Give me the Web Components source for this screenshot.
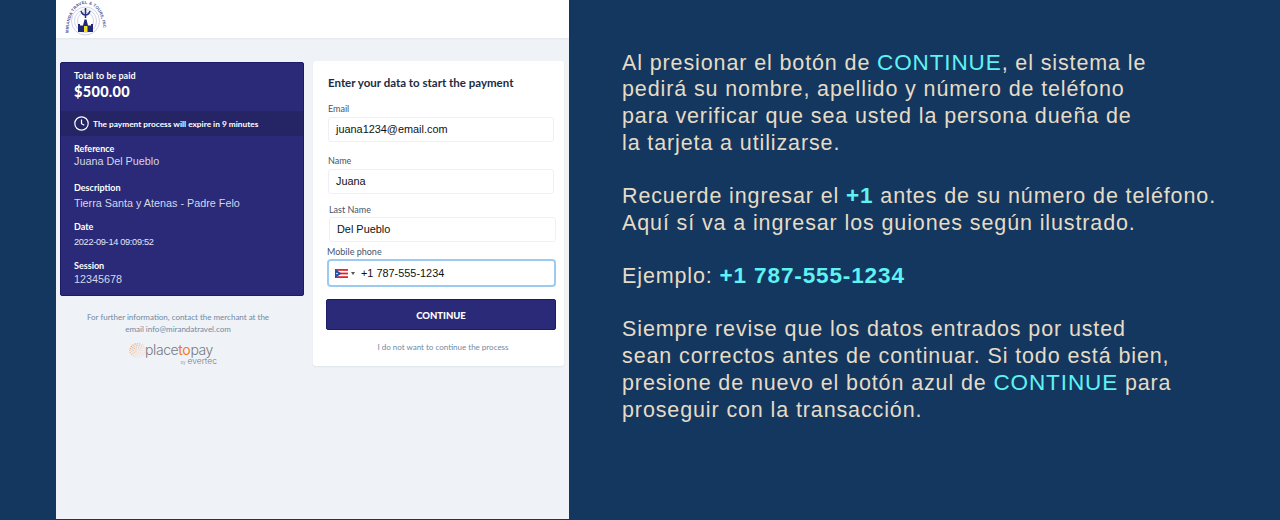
<!DOCTYPE html>
<html lang="es">
<head>
<meta charset="utf-8">
<title>Checkout</title>
<style>
    html, body { margin: 0; height: 520px; overflow: hidden; background: #14375f; }
    body { display: flex; font-family: "Liberation Sans", sans-serif; }
</style>
</head>
<body>
<checkout-panel></checkout-panel>
<help-text></help-text>

<script>
class MerchantLogo extends HTMLElement {
    constructor() {
        super();
        this.attachShadow({ mode: 'open' });
        this.shadowRoot.innerHTML = `
            <style>
                :host { display: block; width: 44px; height: 36px; }
                svg { display: block; }
                text { font: bold 4.2px "Liberation Sans", sans-serif; fill: #4a5499; }
            </style>
            <svg width="44" height="36" viewBox="0 0 44 36">
                <defs><path id="arc" d="M4.5 33 C4.5 -6 39.5 -6 39.5 33"></path></defs>
                <text textLength="70"><textPath href="#arc" textLength="70" lengthAdjust="spacing">MIRANDA TRAVEL &amp; TOURS, INC</textPath></text>
                <g fill="none" stroke="#c3c8de" stroke-width=".8">
                    <ellipse cx="21.5" cy="21" rx="14" ry="14"></ellipse>
                    <ellipse cx="21.5" cy="21" rx="11" ry="11.5"></ellipse>
                    <ellipse cx="21.5" cy="21" rx="8" ry="9"></ellipse>
                </g>
                <path d="M21.5 8v10M17 11c1 3 2.500 4 4.500 4s3.500-1 4.500-4" fill="none" stroke="#2a2f80" stroke-width="1.500"></path>
                <path d="M14 32V24h2v1.500h3l1.500-6h2l1.500 6h3V24h2v8z" fill="#20267a"></path>
                <rect x="20" y="26" width="3.500" height="6" fill="#f2e21c"></rect>
            </svg>
        `;
    }
}

class SummaryItem extends HTMLElement {
    constructor() {
        super();
        this.attachShadow({ mode: 'open' });
        this.shadowRoot.innerHTML = `
            <style>
                :host { display: block; color: #fff; }
                .label { font: 700 9px/12px "Lato", sans-serif; }
                .value { font: 10.800px/14px "Liberation Sans", sans-serif; color: #d5d7e6; margin-top: var(--gap, 0); }
            </style>
            <div class="label"></div>
            <div class="value"><slot></slot></div>
        `;
    }

    connectedCallback() {
        this.shadowRoot.querySelector('.label').textContent = this.getAttribute('label');
    }
}

class PaymentSummary extends HTMLElement {
    constructor() {
        super();
        this.attachShadow({ mode: 'open' });
        this.shadowRoot.innerHTML = `
            <style>
                :host {
                    display: block; box-sizing: border-box; height: 234px;
                    background: #2a2a78; border: 1px solid #1b1b68; border-radius: 2px;
                    color: #fff; font-family: "Lato", sans-serif;
                }
                .total { padding: 7px 13px 0; height: 48px; box-sizing: border-box; }
                .total div { font-weight: 700; font-size: 9px; line-height: 12px; }
                .total strong { display: block; font-weight: 900; font-size: 14.500px; line-height: 19px; letter-spacing: .3px; }
                .expire {
                    display: flex; align-items: center; gap: 4px; height: 25px; padding: 0 13px;
                    background: #252566; font-weight: 700; font-size: 8.300px;
                }
                .list { display: flex; flex-direction: column; padding: 7px 13px 0; }
                summary-item { height: 39px; }
                summary-item:nth-child(1) { --gap: -1px; }
                summary-item:nth-child(2) { --gap: 2px; }
                summary-item:nth-child(3) { --gap: 1px; }
                .date { font-size: 9.200px; letter-spacing: -.3px; color: #e4e6f4; }
            </style>
            <div class="total">
                <div>Total to be paid</div>
                <strong>$500.00</strong>
            </div>
            <div class="expire">
                <svg width="15" height="15" viewBox="0 0 15 15" fill="none" stroke="#fff" stroke-width="1.2">
                    <circle cx="7.5" cy="7.5" r="6.7"></circle>
                    <path d="M7.5 3.5v4.2l2.8 1.6"></path>
                </svg>
                <span>The payment process will expire in 9 minutes</span>
            </div>
            <div class="list">
                <summary-item label="Reference">Juana Del Pueblo</summary-item>
                <summary-item label="Description">Tierra Santa y Atenas - Padre Felo</summary-item>
                <summary-item label="Date"><span class="date">2022-09-14 09:09:52</span></summary-item>
                <summary-item label="Session">12345678</summary-item>
            </div>
        `;
    }
}

class PlaceToPayLogo extends HTMLElement {
    constructor() {
        super();
        this.attachShadow({ mode: 'open' });
        // sunburst of dots, strong at the top left and fading to the bottom right
        const dots = [];
        for (let ring = 1; ring < 5; ring++) {
            const count = ring * 5;
            for (let a = 0; a < count; a++) {
                const angle = (a / count) * Math.PI * 2;
                const x = 8.5 + Math.cos(angle) * ring * 1.9;
                const y = 7.5 + Math.sin(angle) * ring * 1.700;
                const fade = Math.max(0.15, 1 - (x + y) / 24);
                dots.push(`<circle cx="${x.toFixed(1)}" cy="${y.toFixed(1)}" r=".7" fill="#ee8a45" opacity="${fade.toFixed(2)}"></circle>`);
            }
        }
        this.shadowRoot.innerHTML = `
            <style>
                :host { display: flex; align-items: flex-start; justify-content: center; margin-top: 8px; padding-right: 22px; color: #77797f; }
                svg { display: block; margin-right: -1px; }
                .word { font: 300 14px/14px "Inter", sans-serif; letter-spacing: -.4px; }
                .word b { font-weight: 400; color: #ed7a2d; }
                .by { font: 300 8.500px/9px "Inter", sans-serif; text-align: right; margin-right: -4px; }
                .by small { font-size: 4px; margin-right: 2px; }
            </style>
            <svg width="17" height="15" viewBox="0 0 17 15">${dots.join('')}</svg>
            <div>
                <div class="word">place<b>to</b>pay</div>
                <div class="by"><small>by</small>evertec</div>
            </div>
        `;
    }
}

class FormField extends HTMLElement {
    constructor() {
        super();
        this.attachShadow({ mode: 'open' });
        this.shadowRoot.innerHTML = `
            <style>
                :host { display: block; }
                label { display: block; margin-bottom: var(--label-gap, 2px); font: 9px/12px "Lato", sans-serif; color: #46536b; }
                .box {
                    display: flex; align-items: center; box-sizing: border-box; height: 25px;
                    padding: 0 7px 1px; background: #fff; border: 1px solid #eef0f6; border-radius: 3px;
                    font: 10.900px "Liberation Sans", sans-serif; color: #111;
                }
                :host([focused]) .box { height: 28px; padding: 0 6px; border: 2px solid #9ccbf2; border-radius: 4px; }
            </style>
            <label></label>
            <div class="box"><slot></slot></div>
        `;
    }

    connectedCallback() {
        this.shadowRoot.querySelector('label').textContent = this.getAttribute('label');
    }
}

class PaymentForm extends HTMLElement {
    constructor() {
        super();
        this.attachShadow({ mode: 'open' });
        this.shadowRoot.innerHTML = `
            <style>
                :host {
                    display: block; box-sizing: border-box; height: 305px; padding: 15px 10px 0 15px;
                    background: #fff; border-radius: 3px; box-shadow: 0 1px 2px rgba(30, 50, 90, .07);
                    font-family: "Lato", sans-serif;
                }
                h2 { margin: 0 0 14px; font-size: 11.500px; line-height: 13px; font-weight: 700; color: #1c2b45; }
                .email { margin-bottom: 13px; }
                .name { margin-bottom: 10px; }
                .last { margin: 0 -2px 4px 1px; --label-gap: 1px; }
                .phone { margin: 0 -2px 12px -1px; --label-gap: 1px; }
                .flag { display: flex; align-items: center; }
                .flag svg { margin-right: 3px; }
                .caret { width: 0; height: 0; margin-right: 6px; border: 2.500px solid transparent; border-top: 3px solid #555; border-bottom: 0; }
                button {
                    display: block; width: 230px; height: 31px; margin-left: -2px; padding: 1px 0 0;
                    background: #2a2a78; border: 1px solid #1b1b68; border-radius: 2px; color: #fff;
                    font: 900 9.500px "Lato", sans-serif;
                }
                p { margin: 11px 0 0; padding-left: 4px; text-align: center; font-size: 8px; line-height: 12px; color: #6f8ba3; }
            </style>
            <h2>Enter your data to start the payment</h2>
            <form-field class="email" label="Email">juana1234@email.com</form-field>
            <form-field class="name" label="Name">Juana</form-field>
            <form-field class="last" label="Last Name">Del Pueblo</form-field>
            <form-field class="phone" label="Mobile phone" focused>
                <div class="flag">
                    <svg width="13" height="9" viewBox="0 0 13 9">
                        <rect width="13" height="9" fill="#e0252e"></rect>
                        <rect y="1.8" width="13" height="1.8" fill="#fff"></rect>
                        <rect y="5.4" width="13" height="1.8" fill="#fff"></rect>
                        <path d="M0 0l6.5 4.5L0 9z" fill="#1c4fb0"></path>
                        <circle cx="2" cy="4.5" r=".8" fill="#fff"></circle>
                    </svg>
                    <i class="caret"></i>
                    <span>+1 787-555-1234</span>
                </div>
            </form-field>
            <button type="button">CONTINUE</button>
            <p>I do not want to continue the process</p>
        `;
    }
}

class CheckoutPanel extends HTMLElement {
    constructor() {
        super();
        this.attachShadow({ mode: 'open' });
        this.shadowRoot.innerHTML = `
            <style>
                :host {
                    display: block; box-sizing: border-box; width: 513px; height: 519px; margin-left: 56px;
                    background: #eff2f7; font-family: "Lato", sans-serif;
                }
                header {
                    display: flex; align-items: flex-start; box-sizing: border-box; height: 38px; padding: 0 0 0 8px;
                    background: #fff; box-shadow: 0 1px 2px rgba(30, 50, 90, .06);
                }
                .main { display: grid; grid-template-columns: 244px 251px; gap: 9px; padding: 23px 0 0 4px; }
                .left { padding-top: 1px; }
                .info {
                    margin: 16px 14px 0 6px; text-align: center; font-size: 8px; line-height: 11.500px; color: #72899f;
                }
            </style>
            <header><merchant-logo></merchant-logo></header>
            <div class="main">
                <div class="left">
                    <payment-summary></payment-summary>
                    <div class="info">For further information, contact the merchant at the<br>email info@mirandatravel.com</div>
                    <place-to-pay-logo></place-to-pay-logo>
                </div>
                <payment-form></payment-form>
            </div>
        `;
    }
}

class HelpText extends HTMLElement {
    constructor() {
        super();
        this.attachShadow({ mode: 'open' });
        this.shadowRoot.innerHTML = `
            <style>
                :host {
                    display: block; flex: 1; box-sizing: border-box; padding: 49.500px 0 0 53px;
                    font: 21.500px/26.700px "Liberation Sans", sans-serif; letter-spacing: .88px;
                    color: #e5dcc6; white-space: nowrap;
                }
                p { margin: 0 0 26.700px; }
                b { font-weight: 400; font-size: 22.500px; line-height: 1; color: #5ff2f4; }
                b.strong { font-weight: 700; }
            </style>
            <p>Al presionar el botón de <b>CONTINUE</b>, el sistema le<br>
            pedirá su nombre, apellido y número de teléfono<br>
            para verificar que sea usted la persona dueña de<br>
            la tarjeta a utilizarse.</p>
            <p>Recuerde ingresar el <b class="strong">+1</b> antes de su número de teléfono.<br>
            Aquí sí va a ingresar los guiones según ilustrado.</p>
            <p>Ejemplo: <b class="strong">+1 787-555-1234</b></p>
            <p>Siempre revise que los datos entrados por usted<br>
            sean correctos antes de continuar. Si todo está bien,<br>
            presione de nuevo el botón azul de <b>CONTINUE</b> para<br>
            proseguir con la transacción.</p>
        `;
    }
}

customElements.define('merchant-logo', MerchantLogo);
customElements.define('summary-item', SummaryItem);
customElements.define('payment-summary', PaymentSummary);
customElements.define('place-to-pay-logo', PlaceToPayLogo);
customElements.define('form-field', FormField);
customElements.define('payment-form', PaymentForm);
customElements.define('checkout-panel', CheckoutPanel);
customElements.define('help-text', HelpText);
</script>
</body>
</html>
